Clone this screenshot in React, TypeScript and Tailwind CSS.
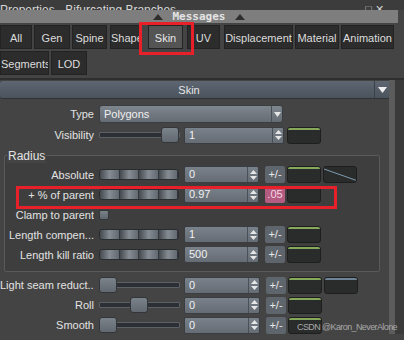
import React from 'react';

const font = { fontFamily: '"Liberation Sans", Arial, sans-serif' };

const Label = ({ text }: { text: string }) => (
  <div className="w-[94px] shrink-0 text-right text-[11px] text-[#e2e2e2] whitespace-nowrap overflow-hidden leading-[14px]">{text}</div>
);

const Spinner = () => (
  <div className="w-[11px] h-full flex flex-col items-center justify-center gap-[2px] border-l border-[#4a5056]">
    <svg width="7" height="4" viewBox="0 0 7 4"><path d="M0 4 L3.5 0 L7 4 Z" fill="#e6e6e6" /></svg>
    <svg width="7" height="4" viewBox="0 0 7 4"><path d="M0 0 L3.5 4 L7 0 Z" fill="#e6e6e6" /></svg>
  </div>
);

const Field = ({ value, width }: { value: string; width: string }) => (
  <div className={`${width} h-[17px] shrink-0 flex rounded-[2px] bg-gradient-to-b from-[#79818a] to-[#656c74] border border-[#3a3e42]`}>
    <div className="flex-1 pl-[4px] text-[11px] leading-[15px] text-[#f0f0f0]">{value}</div>
    <Spinner />
  </div>
);

const Swatch = ({ line = '#86a85a', curve = false }: { line?: string; curve?: boolean }) => (
  <div className="w-[34px] h-[17px] shrink-0 rounded-[3px] bg-[#2a2c2b] border border-[#1d1e1d] overflow-hidden relative">
    <div className="h-[2px]" style={{ background: line }} />
    {curve && (
      <svg className="absolute inset-0" width="34" height="17" viewBox="0 0 34 17">
        <path d="M0 2 L34 14" stroke="#7f9bb0" strokeWidth="1" />
      </svg>
    )}
  </div>
);

const PlusMinus = ({ pink = false }: { pink?: boolean }) => (
  <div className={`w-[20px] h-[17px] shrink-0 rounded-[2px] text-[11px] leading-[17px] text-center ${pink ? 'bg-[#b45b81] text-[#f3d6e2]' : 'bg-[#5e656c] text-[#e8e8e8]'}`}>
    {pink ? '.05' : '+/-'}
  </div>
);

const SegSlider = () => (
  <div className="w-[80px] h-[11px] shrink-0 flex rounded-[3px] overflow-hidden border border-[#2a2d30]">
    {[0, 1, 2, 3].map((i) => (
      <div key={i} className="flex-1 bg-gradient-to-r from-[#454a4f] via-[#858c93] to-[#626970] border-r border-[#33373b]" />
    ))}
  </div>
);

const TrackSlider = ({ thumb }: { thumb: number }) => (
  <div className="w-[81px] h-[16px] shrink-0 relative flex items-center">
    <div className="w-full h-[6px] bg-[#2c3034] border border-[#5b6167] rounded-[1px]" />
    <div className="absolute top-0 w-[18px] h-[16px] rounded-[3px] bg-gradient-to-b from-[#7a828a] to-[#626970] border border-[#32363a]" style={{ left: thumb }} />
  </div>
);

const Tab = ({ text, w, ml, active = false }: { text: string; w: string; ml: string; active?: boolean }) => (
  <div className={`${w} ${ml} h-[24px] shrink-0 overflow-hidden text-center text-[11px] leading-[24px] whitespace-nowrap border border-[#232323] ${active ? 'bg-[#545454] text-[#e8e8e8]' : 'bg-[#2c2c2c] text-[#dcdcdc]'}`}>
    {text}
  </div>
);

export default function App() {
  return (
    <div className="w-[404px] h-[340px] bg-[#444444] overflow-hidden relative" style={font}>
      {/* title bar */}
      <div className="h-[10px] bg-[#3c3c3c] overflow-hidden flex items-end relative">
        <div className="text-[12px] leading-[12px] text-[#d6d6d6] translate-y-[6px] whitespace-nowrap">Properties - Bifurcating Branches</div>
        <div className="absolute right-[20px] bottom-[-5px] text-[11px] leading-[12px] text-[#d0d0d0]">□ ✕</div>
      </div>
      {/* messages bar */}
      <div className="h-[13px] bg-[#7e7e7e] mr-[6px] flex items-center justify-center gap-[10px]">
        <svg width="10" height="6" viewBox="0 0 10 6"><path d="M0 6 L5 0 L10 6 Z" fill="#2e2e2e" /></svg>
        <span className="text-[11px] leading-[13px] font-bold text-[#e4e4e4]" style={{ fontFamily: '"DejaVu Sans Mono", monospace' }}>Messages</span>
        <svg width="10" height="6" viewBox="0 0 10 6"><path d="M0 6 L5 0 L10 6 Z" fill="#2e2e2e" /></svg>
      </div>
      {/* tabs */}
      <div className="pt-[2px] h-[55px]">
        <div className="flex">
          <Tab text="All" w="w-[32px]" ml="ml-0" />
          <Tab text="Gen" w="w-[36px]" ml="ml-[2px]" />
          <Tab text="Spine" w="w-[35px]" ml="ml-[2px]" />
          <Tab text="Shape" w="w-[30px]" ml="ml-[3px]" />
          <Tab text="Skin" w="w-[35px]" ml="ml-[8px]" active />
          <Tab text="UV" w="w-[33px]" ml="ml-[4px]" />
          <Tab text="Displacement" w="w-[69px]" ml="ml-[4px]" />
          <Tab text="Material" w="w-[44px]" ml="ml-[2px]" />
          <Tab text="Animation" w="w-[53px]" ml="ml-[2px]" />
        </div>
        <div className="flex mt-[2px]">
          <Tab text="Segments" w="w-[49px]" ml="ml-0" />
          <Tab text="LOD" w="w-[36px]" ml="ml-[2px]" />
        </div>
      </div>
      <div className="h-[2px] bg-[#2e2e2e]" />
      {/* main area */}
      <div className="flex">
        <div className="w-[389px] shrink-0">
          {/* Skin header */}
          <div className="h-[18px] mt-[1px] flex bg-gradient-to-b from-[#5d6671] to-[#4b535d] rounded-l-[3px] border-b border-[#2f3338]">
            <div className="flex-1 text-center text-[11px] leading-[18px] text-[#e6e6e6] pl-[4px]">Skin</div>
            <div className="w-[15px] flex items-center justify-center border-l border-[#3a4048]">
              <svg width="9" height="6" viewBox="0 0 9 6"><path d="M0 0 L4.5 6 L9 0 Z" fill="#eeeeee" /></svg>
            </div>
          </div>
          {/* Type */}
          <div className="flex items-center gap-[5px] mt-[6px] h-[18px]">
            <Label text="Type" />
            <div className="w-[184px] h-[18px] flex rounded-[3px] bg-gradient-to-b from-[#7d858d] to-[#656c74] border border-[#3a3e42]">
              <div className="flex-1 pl-[4px] text-[11px] leading-[16px] text-[#f0f0f0]">Polygons</div>
              <div className="w-[11px] flex items-center justify-center border-l border-[#4a5056]">
                <svg width="7" height="5" viewBox="0 0 7 5"><path d="M0 0 L3.5 5 L7 0 Z" fill="#e6e6e6" /></svg>
              </div>
            </div>
          </div>
          {/* Visibility */}
          <div className="flex items-center gap-[5px] mt-[4px] h-[16px]">
            <Label text="Visibility" />
            <TrackSlider thumb={62} />
            <div className="-ml-[1px]"><Field value="1" width="w-[100px]" /></div>
            <div className="-ml-[2px]"><Swatch /></div>
          </div>
          {/* Radius group */}
          <div className="relative mt-[12px] ml-[4px] w-[376px] h-[117px] border border-[#5a5a5a] bg-[#3e3e3e] rounded-[2px]">
            <div className="absolute left-[2px] top-[-7px] px-[1px] text-[12px] leading-[14px] text-[#e2e2e2] bg-[#444444]">Radius</div>
            <div className="flex flex-col pt-[10px] gap-[3px]">
              {[
                { label: 'Absolute', value: '0', pink: false, curve: true },
                { label: '+ % of parent', value: '0.97', pink: true, curve: false },
              ].map((r) => (
                <div key={r.label} className="flex items-center gap-[5px] h-[17px] -ml-[5px]">
                  <Label text={r.label} />
                  <SegSlider />
                  <Field value={r.value} width="w-[75px]" />
                  <div className="ml-[1px]"><PlusMinus pink={r.pink} /></div>
                  <div className="-ml-[3px]"><Swatch line={r.pink ? '#2a2c2b' : '#86a85a'} /></div>
                  {r.curve && <div className="-ml-[3px]"><Swatch line="#2a2c2b" curve /></div>}
                </div>
              ))}
              <div className="flex items-center gap-[5px] h-[17px] -ml-[5px]">
                <Label text="Clamp to parent" />
                <div className="w-[10px] h-[10px] rounded-[2px] bg-gradient-to-b from-[#7a828a] to-[#5f666d] border border-[#33373b]" />
              </div>
              {[
                { label: 'Length compen...', value: '1' },
                { label: 'Length kill ratio', value: '500' },
              ].map((r) => (
                <div key={r.label} className="flex items-center gap-[5px] h-[17px] -ml-[5px]">
                  <Label text={r.label} />
                  <SegSlider />
                  <Field value={r.value} width="w-[75px]" />
                  <div className="ml-[1px]"><PlusMinus /></div>
                  <div className="-ml-[3px]"><Swatch /></div>
                </div>
              ))}
            </div>
          </div>
          {/* bottom rows */}
          <div className="flex flex-col gap-[2px] mt-[4px]">
            {[
              { label: 'Light seam reduct...', thumb: 0, second: true },
              { label: 'Roll', thumb: 31, second: false },
              { label: 'Smooth', thumb: 0, second: false },
            ].map((r) => (
              <div key={r.label} className="flex items-center gap-[5px] h-[18px]">
                <Label text={r.label} />
                <TrackSlider thumb={r.thumb} />
                <div className="-ml-[1px]"><Field value="0" width="w-[76px]" /></div>
                <div className="ml-[1px]"><PlusMinus /></div>
                <div className="-ml-[3px]"><Swatch /></div>
                {r.second && <div className="-ml-[3px]"><Swatch line="#6f8497" /></div>}
              </div>
            ))}
          </div>
        </div>
        {/* scrollbar */}
        <div className="w-[15px] flex">
          <div className="w-[6px] bg-[#5c5c5c]" />
          <div className="flex-1 bg-[#3a3a3a]" />
        </div>
      </div>
      {/* annotations */}
      <div className="absolute left-[139px] top-[22px] w-[55px] h-[33px] border-[3px] border-[#e8202a]" />
      <div className="absolute left-[16px] top-[186px] w-[321px] h-[23px] border-[3px] border-[#e8202a]" />
      <div className="absolute left-[297px] top-[321px] text-[9px] leading-[12px] tracking-[-0.6px] text-[#a8a8a8] whitespace-nowrap">CSDN @Karon_NeverAlone</div>
    </div>
  );
}
